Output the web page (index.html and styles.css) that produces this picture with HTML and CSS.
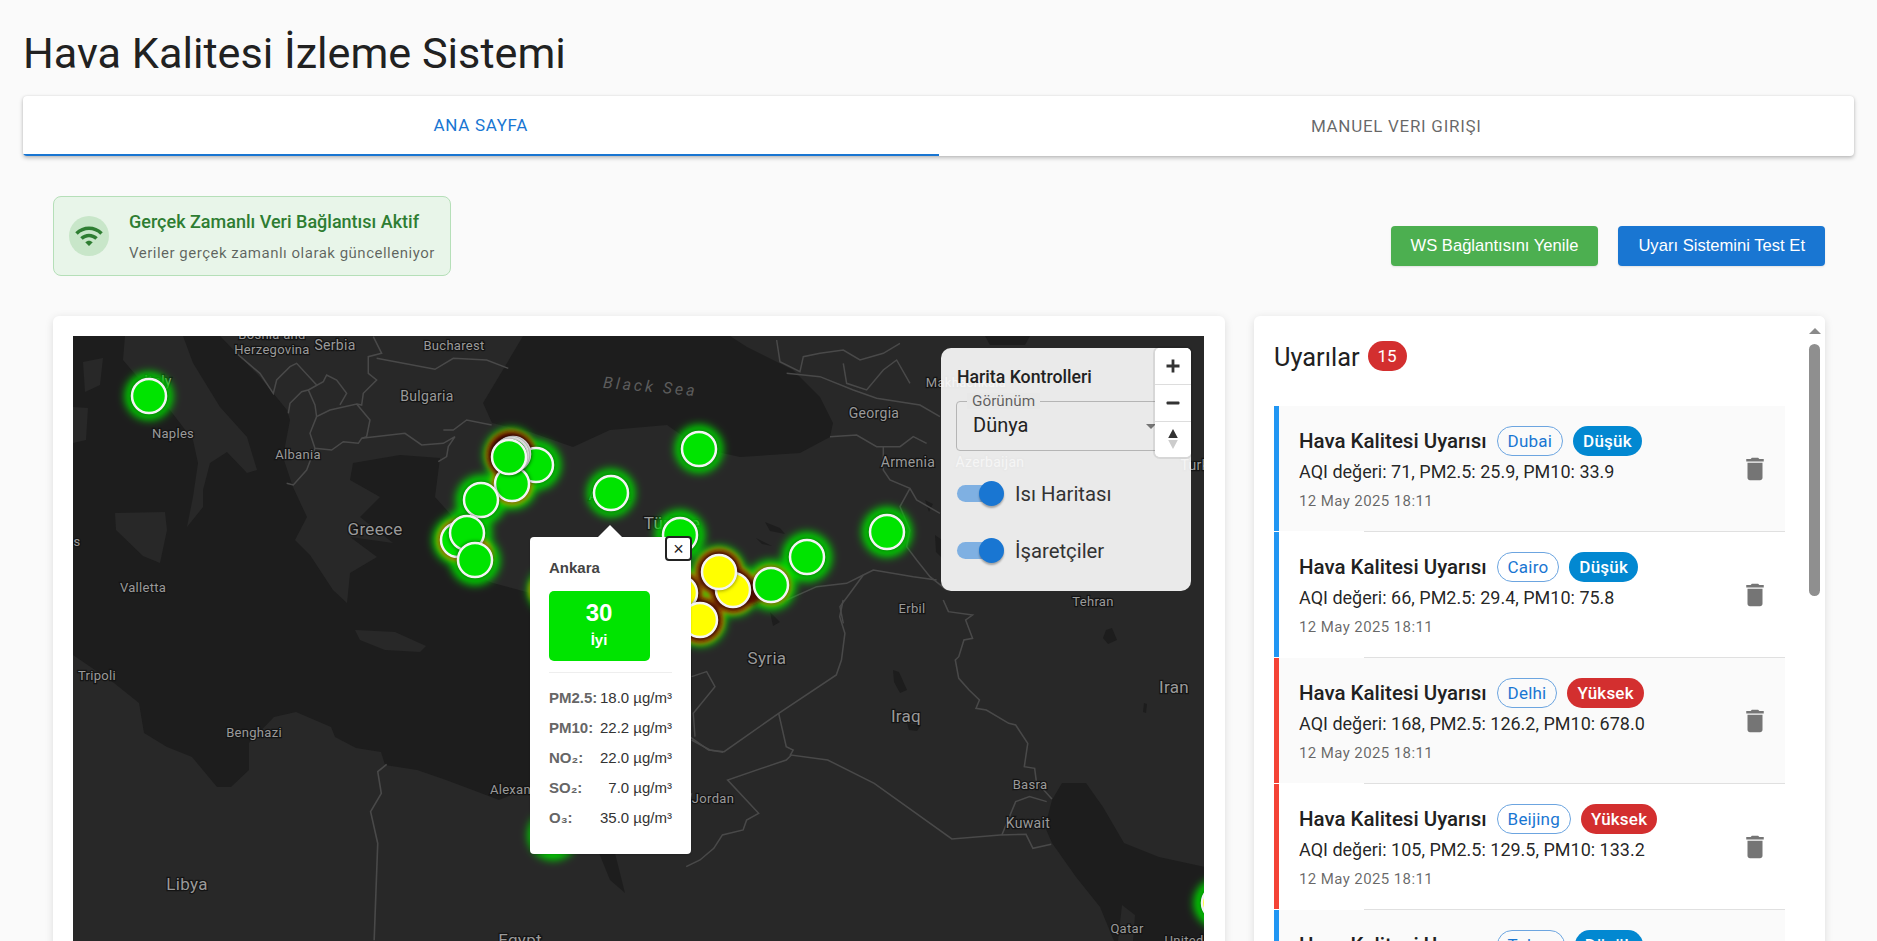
FILE: index.html
```html
<!DOCTYPE html>
<html lang="tr">
<head>
<meta charset="utf-8">
<title>Hava Kalitesi İzleme Sistemi</title>
<link rel="stylesheet" href="styles.css">
</head>
<body>
<div class="app">
  <h1 class="page-title">Hava Kalitesi İzleme Sistemi</h1>
  <nav class="tabs">
    <div class="tab tab-active">ANA SAYFA</div>
    <div class="tab">MANUEL VERI GIRIŞI</div>
  </nav>
  <main class="main">
    <section class="status-row">
      <div class="status-card">
        <div class="status-icon">
          <svg viewBox="0 0 24 24" width="30" height="30"><path d="M1 9l2 2c4.97-4.97 13.03-4.97 18 0l2-2C16.93 2.93 7.08 2.93 1 9zm8 8l3 3 3-3c-1.65-1.66-4.34-1.66-6 0zm-4-4l2 2c2.76-2.76 7.24-2.76 10 0l2-2C15.14 9.14 8.87 9.14 5 13z"/></svg>
        </div>
        <div class="status-text">
          <div class="status-title">Gerçek Zamanlı Veri Bağlantısı Aktif</div>
          <div class="status-sub">Veriler gerçek zamanlı olarak güncelleniyor</div>
        </div>
      </div>
      <div class="actions">
        <button class="btn btn-green">WS Bağlantısını Yenile</button>
        <button class="btn btn-blue">Uyarı Sistemini Test Et</button>
      </div>
    </section>
    <section class="grid">
      <div class="card map-card">
        <div class="map">
          <svg class="map-svg" viewBox="73 336 1131 700" width="1131" height="700">
            <defs>
              <filter id="b5" x="-50%" y="-50%" width="200%" height="200%"><feGaussianBlur stdDeviation="4"/></filter>
              <filter id="b3" x="-50%" y="-50%" width="200%" height="200%"><feGaussianBlur stdDeviation="2.5"/></filter>
            </defs>
            <rect class="land" x="73" y="336" width="1132" height="700"/>
            <path class="water" d="M73 336H125L123 360 147 388 170 410 193 440 198 463 193 497 187 527 203 507 203 490 210 463 227 452 247 473 257 470 247 437 220 407 193 363 183 336H220L260 377 287 410 290 420 283 457 293 487 307 517 295 540 310 555 333 590 347 603 350 573 377 557 350 537 393 543 360 517 380 497 350 480 353 463 400 455 440 458 435 497 453 517 440 543 460 570 493 583 530 593 600 615 660 620 692 650 692 700 688 745 660 780 530 787 499 800 478 792 446 780 417 770 385 765 381 752 356 748 335 737 331 727 296 712 274 717 249 743 249 770 231 787 217 787 192 757 167 747 144 733 139 703 114 683 73 655Z"/>
            <path class="water" d="M523 336L507 363 483 403 492 423 530 432 573 447 610 430 667 425 700 448 740 457 800 453 830 437 833 423 820 397 793 370 747 347 730 336Z"/>
            <path class="water" d="M1052 800L1062 783 1086 783 1103 807 1124 843 1159 857 1205 867V941H1114L1100 907 1076 877 1052 843 1045 827Z"/>
            <path class="water" d="M599 853L615 853 625 893 610 880Z"/>
            <path class="water" d="M985 336H1030L1025 345 990 345Z"/>
            <path class="water" d="M893 670L899 672 907 690 900 693 894 682ZM907 723L921 725 917 731 909 730ZM1106 630L1112 628 1117 640 1108 644 1103 638ZM1144 703L1147 704 1146 713 1143 712ZM935 535L942 540 944 560 936 552Z"/>
            <path class="water" d="M765 522L780 528 785 534 770 531ZM756 538L772 546 762 544ZM770 612L780 622 773 626ZM925 500L933 504 929 512Z"/>
            <path class="land" d="M83 362L103 358 100 385 85 392ZM73 407L88 408 86 440 73 443ZM115 513L165 512 167 530 160 563 143 556 116 530ZM355 630L395 632 426 646 420 652 385 650 360 640ZM1122 905L1135 915 1133 941 1118 941Z"/>
            <g class="borders" transform="translate(60 330) scale(.3333)">
              <path d="M530 70L600 130 640 190 650 150 690 110 710 100 770 165"/>
              <path d="M940 20L965 70 925 80 925 130 950 150 910 190 905 225 890 222"/>
              <path d="M890 222L930 270 920 320 905 325 895 340 850 335 815 360 765 355 750 310 770 260 810 240Z"/>
              <path d="M905 325L1035 310 1085 345 1150 340 1185 320 1165 350 1160 380 1135 395M1150 300L1180 300 1220 270 1295 285"/>
              <path d="M950 85L1030 100 1125 118 1180 85 1280 90 1345 115"/>
              <path d="M685 250L690 220 725 185 745 180 765 225 770 260M745 180L790 155 800 135 830 150 860 190 840 225"/>
              <path d="M765 355L740 420 700 465 680 460"/>
            </g>
            <g class="borders" transform="translate(500 330) scale(.3333)">
              <path d="M860 130L960 140 1060 180 1130 205 1260 225 1320 260"/>
              <path d="M990 320L1070 315 1130 350 1200 350 1240 320 1280 340"/>
              <path d="M1150 350L1150 420 1170 450 1230 475 1250 510 1320 550"/>
              <path d="M830 30L840 95 900 125 910 80 960 70 1030 60 1080 90 1150 70 1200 40"/>
              <path d="M1030 100L1040 160 1100 180 1150 120 1190 90 1230 160"/>
              <path d="M1230 475L1200 530 1230 600 1220 650 1250 690 1290 740 1340 780"/>
              <path d="M860 810L950 770 1040 760 1090 735 1120 720 1240 740 1310 750"/>
              <path d="M1090 735L1050 790 1020 830 1030 880"/>
            </g>
            <g class="borders" transform="translate(420 420) scale(.3333)">
              <path d="M815 770L860 755 885 800 820 880 825 950"/>
              <path d="M815 960L870 990 910 997"/>
              <path d="M760 1300L815 1120"/>
            </g>
            <g class="borders" transform="translate(700 600) scale(.345 .3333)">
              <path d="M415 0L405 50 420 100 410 180 395 225 228 340 70 455 25 450 -30 410"/>
              <path d="M228 340L250 440 270 450 262 465 370 480 505 550 730 717 870 705 945 703 965 745 1018 733"/>
              <path d="M265 465L250 480 80 540 170 640 135 660 125 690 65 705 40 745 0 780 -40 800"/>
              <path d="M705 0L720 35 790 45 770 60 790 115 765 120 750 170 740 180 750 235 780 270 810 300 800 325 830 330 895 370 915 375 950 430 940 500 970 505 975 545 1020 597"/>
              <path d="M875 705L915 605 955 590 1005 605"/>
            </g>
            <g class="borders" transform="translate(60 620) scale(.357 .3333)">
              <path d="M915 433L890 455 900 520 870 575 890 670 880 961"/>
            </g>
            <g class="labels">
              <text class="lb-sm" x="272" y="339">Bosnia and</text>
              <text class="lb-sm" x="272" y="354">Herzegovina</text>
              <text class="lb-md" x="335" y="350">Serbia</text>
              <text class="lb-sm" x="454" y="350">Bucharest</text>
              <text class="lb-md" x="158" y="386">Italy</text>
              <text class="lb-md" x="427" y="401">Bulgaria</text>
              <text class="lb-sm" x="173" y="438">Naples</text>
              <text class="lb-sm" x="298" y="459">Albania</text>
              <text class="lb-lg" x="375" y="535">Greece</text>
              <text class="lb-sm" x="77" y="546">s</text>
              <text class="lb-sm" x="143" y="592">Valletta</text>
              <text class="lb-sm" x="97" y="680">Tripoli</text>
              <text class="lb-sm" x="254" y="737">Benghazi</text>
              <text class="lb-sm" x="522" y="794">Alexandria</text>
              <text class="lb-lg" x="187" y="890">Libya</text>
              <text class="lb-lg" x="520" y="946">Egypt</text>
              <text class="lb-sea" transform="translate(650 392) rotate(5)">Black Sea</text>
              <text class="lb-md" x="874" y="418">Georgia</text>
              <text class="lb-sm" x="966" y="387">Makhachkala</text>
              <text class="lb-md" x="908" y="467">Armenia</text>
              <text class="lb-md" x="990" y="467">Azerbaijan</text>
              <text class="lb-lg" x="672" y="529">Türkiye</text>
              <text class="lb-sm" x="610" y="500">Ankara</text>
              <text class="lb-sm" x="912" y="613">Erbil</text>
              <text class="lb-sm" x="1093" y="606">Tehran</text>
              <text class="lb-md" x="1225" y="470">Turkmenistan</text>
              <text class="lb-lg" x="767" y="664">Syria</text>
              <text class="lb-sm" x="713" y="803">Jordan</text>
              <text class="lb-lg" x="906" y="722">Iraq</text>
              <text class="lb-lg" x="1174" y="693">Iran</text>
              <text class="lb-sm" x="1030" y="789">Basra</text>
              <text class="lb-md" x="1028" y="828">Kuwait</text>
              <text class="lb-sm" x="1127" y="933">Qatar</text>
              <text class="lb-sm" x="1184" y="945">United</text>
            </g>
            <g class="heat-green" filter="url(#b5)">
              <circle cx="149" cy="396" r="24"/><circle cx="481" cy="500" r="25"/><circle cx="512" cy="484" r="25"/><circle cx="536" cy="465" r="25"/><circle cx="511" cy="455" r="27"/><circle cx="458" cy="540" r="25"/><circle cx="467" cy="533" r="25"/><circle cx="475" cy="560" r="25"/><circle cx="699" cy="449" r="24"/><circle cx="611" cy="493" r="24"/><circle cx="680" cy="535" r="25"/><circle cx="719" cy="572" r="26"/><circle cx="733" cy="590" r="26"/><circle cx="771" cy="585" r="25"/><circle cx="807" cy="557" r="25"/><circle cx="887" cy="532" r="25"/><circle cx="700" cy="620" r="26"/><circle cx="680" cy="593" r="26"/><circle cx="553" cy="590" r="25"/><circle cx="553" cy="835" r="25"/><circle cx="1219" cy="903" r="25"/>
            </g>
            <g class="heat-yellow" filter="url(#b3)">
              <circle cx="511" cy="455" r="25"/><circle cx="512" cy="484" r="21"/><circle cx="458" cy="540" r="21"/><circle cx="475" cy="555" r="18"/><circle cx="719" cy="572" r="24"/><circle cx="733" cy="590" r="24"/><circle cx="700" cy="620" r="24"/><circle cx="680" cy="593" r="23"/><circle cx="771" cy="585" r="20"/><circle cx="548" cy="590" r="19"/>
            </g>
            <g class="heat-red" filter="url(#b3)">
              <circle cx="511" cy="455" r="24"/><circle cx="719" cy="572" r="22"/><circle cx="733" cy="590" r="22"/><circle cx="700" cy="620" r="22"/><circle cx="680" cy="593" r="21"/><circle cx="750" cy="592" r="13"/>
            </g>
            <g class="markers">
              <circle class="mk-g" cx="149" cy="396" r="17"/>
              <circle class="mk-g" cx="536" cy="465" r="17"/>
              <circle class="mk-g" cx="512" cy="484" r="17"/>
              <circle class="mk-g" cx="513" cy="454" r="17"/>
              <circle class="mk-g" cx="511" cy="455" r="17"/>
              <circle class="mk-g" cx="509" cy="457" r="17"/>
              <circle class="mk-g" cx="481" cy="500" r="17"/>
              <circle class="mk-g" cx="458" cy="540" r="17"/>
              <circle class="mk-g" cx="467" cy="533" r="17"/>
              <circle class="mk-g" cx="475" cy="560" r="17"/>
              <circle class="mk-g" cx="699" cy="449" r="17"/>
              <circle class="mk-g" cx="611" cy="493" r="17"/>
              <circle class="mk-g" cx="680" cy="535" r="17"/>
              <circle class="mk-y" cx="680" cy="593" r="17"/>
              <circle class="mk-y" cx="733" cy="590" r="17"/>
              <circle class="mk-y" cx="719" cy="572" r="17"/>
              <circle class="mk-y" cx="700" cy="620" r="17"/>
              <circle class="mk-g" cx="771" cy="585" r="17"/>
              <circle class="mk-g" cx="807" cy="557" r="17"/>
              <circle class="mk-g" cx="887" cy="532" r="17"/>
              <circle class="mk-y" cx="1219" cy="903" r="17"/>
            </g>
          </svg>
          <div class="popup">
            <span class="popup-tip"></span>
            <button class="popup-close">×</button>
            <div class="popup-city">Ankara</div>
            <div class="aqi-box">
              <div class="aqi-num">30</div>
              <div class="aqi-label">İyi</div>
            </div>
            <div class="popup-rows">
              <div class="popup-row"><b>PM2.5:</b><span>18.0 µg/m³</span></div>
              <div class="popup-row"><b>PM10:</b><span>22.2 µg/m³</span></div>
              <div class="popup-row"><b>NO₂:</b><span>22.0 µg/m³</span></div>
              <div class="popup-row"><b>SO₂:</b><span>7.0 µg/m³</span></div>
              <div class="popup-row"><b>O₃:</b><span>35.0 µg/m³</span></div>
            </div>
          </div>
          <div class="panel">
            <div class="panel-title">Harita Kontrolleri</div>
            <div class="select">
              <span class="select-label">Görünüm</span>
              <span class="select-value">Dünya</span>
              <span class="select-arrow"></span>
            </div>
            <div class="switch-row">
              <span class="switch"><span class="switch-thumb"></span></span>
              <span class="switch-label">Isı Haritası</span>
            </div>
            <div class="switch-row">
              <span class="switch"><span class="switch-thumb"></span></span>
              <span class="switch-label">İşaretçiler</span>
            </div>
          </div>
          <div class="zoom-ctrl">
            <button class="zoom-btn"><svg viewBox="0 0 16 16" width="16" height="16"><path d="M6.600 1.500h2.800v5.100h5.100v2.800H9.400v5.100H6.600V9.400H1.500V6.600h5.100z"/></svg></button>
            <button class="zoom-btn"><svg viewBox="0 0 16 16" width="16" height="16"><rect x="1.500" y="6.600" width="13" height="2.800" rx="1"/></svg></button>
            <button class="zoom-btn"><svg viewBox="0 0 12 24" width="12" height="24"><path d="M6 2l4.800 9H1.200z"/><path class="compass-low" d="M6 22l4.800-9H1.200z"/></svg></button>
          </div>
        </div>
      </div>
      <aside class="card alerts-card">
        <div class="alerts-body">
          <div class="alerts-head">
            <h2 class="alerts-title">Uyarılar</h2>
            <span class="alerts-count">15</span>
          </div>
          <ul class="alert-list">
            <li class="alert alert-low alert-odd">
              <div class="alert-main">
                <div class="alert-top"><strong class="alert-title">Hava Kalitesi Uyarısı</strong><span class="chip chip-city">Dubai</span><span class="chip chip-low">Düşük</span></div>
                <div class="alert-text">AQI değeri: 71, PM2.5: 25.9, PM10: 33.9</div>
                <div class="alert-date">12 May 2025 18:11</div>
              </div>
              <svg class="trash" viewBox="0 0 24 24" width="30" height="30"><path d="M6 19c0 1.100.9 2 2 2h8c1.100 0 2-.9 2-2V7H6v12zM19 4h-3.500l-1-1h-5l-1 1H5v2h14V4z"/></svg>
            </li>
            <li class="divider"></li>
            <li class="alert alert-low">
              <div class="alert-main">
                <div class="alert-top"><strong class="alert-title">Hava Kalitesi Uyarısı</strong><span class="chip chip-city">Cairo</span><span class="chip chip-low">Düşük</span></div>
                <div class="alert-text">AQI değeri: 66, PM2.5: 29.4, PM10: 75.8</div>
                <div class="alert-date">12 May 2025 18:11</div>
              </div>
              <svg class="trash" viewBox="0 0 24 24" width="30" height="30"><path d="M6 19c0 1.100.9 2 2 2h8c1.100 0 2-.9 2-2V7H6v12zM19 4h-3.500l-1-1h-5l-1 1H5v2h14V4z"/></svg>
            </li>
            <li class="divider"></li>
            <li class="alert alert-high alert-odd">
              <div class="alert-main">
                <div class="alert-top"><strong class="alert-title">Hava Kalitesi Uyarısı</strong><span class="chip chip-city">Delhi</span><span class="chip chip-high">Yüksek</span></div>
                <div class="alert-text">AQI değeri: 168, PM2.5: 126.2, PM10: 678.0</div>
                <div class="alert-date">12 May 2025 18:11</div>
              </div>
              <svg class="trash" viewBox="0 0 24 24" width="30" height="30"><path d="M6 19c0 1.100.9 2 2 2h8c1.100 0 2-.9 2-2V7H6v12zM19 4h-3.500l-1-1h-5l-1 1H5v2h14V4z"/></svg>
            </li>
            <li class="divider"></li>
            <li class="alert alert-high">
              <div class="alert-main">
                <div class="alert-top"><strong class="alert-title">Hava Kalitesi Uyarısı</strong><span class="chip chip-city">Beijing</span><span class="chip chip-high">Yüksek</span></div>
                <div class="alert-text">AQI değeri: 105, PM2.5: 129.5, PM10: 133.2</div>
                <div class="alert-date">12 May 2025 18:11</div>
              </div>
              <svg class="trash" viewBox="0 0 24 24" width="30" height="30"><path d="M6 19c0 1.100.9 2 2 2h8c1.100 0 2-.9 2-2V7H6v12zM19 4h-3.500l-1-1h-5l-1 1H5v2h14V4z"/></svg>
            </li>
            <li class="divider"></li>
            <li class="alert alert-low alert-odd">
              <div class="alert-main">
                <div class="alert-top"><strong class="alert-title">Hava Kalitesi Uyarısı</strong><span class="chip chip-city">Tokyo</span><span class="chip chip-low">Düşük</span></div>
                <div class="alert-text">AQI değeri: 58, PM2.5: 22.1, PM10: 41.6</div>
                <div class="alert-date">12 May 2025 18:11</div>
              </div>
              <svg class="trash" viewBox="0 0 24 24" width="30" height="30"><path d="M6 19c0 1.100.9 2 2 2h8c1.100 0 2-.9 2-2V7H6v12zM19 4h-3.500l-1-1h-5l-1 1H5v2h14V4z"/></svg>
            </li>
          </ul>
        </div>
        <div class="scrollbar">
          <span class="scroll-arrow"></span>
          <span class="scroll-thumb"></span>
        </div>
      </aside>
    </section>
  </main>
</div>
</body>
</html>
```

FILE: styles.css
```css
* { box-sizing: border-box; }
html, body { margin: 0; height: 100%; overflow: hidden; }
body { background: #fafafa; font-family: Roboto, "Liberation Sans", sans-serif; color: rgba(0,0,0,.87); }
.app { height: 941px; overflow: hidden; padding: 0 23px; }

.page-title { margin: 0; padding-top: 28px; height: 96px; font-size: 43.200px; line-height: 52px; font-weight: 400; letter-spacing: 0; color: #212121; }

.tabs { display: grid; grid-template-columns: 1fr 1fr; height: 60px; background: #fff; border-radius: 4px; box-shadow: 0 2px 4px rgba(0,0,0,.25), 0 0 2px rgba(0,0,0,.1); overflow: hidden; }
.tab { display: flex; align-items: center; justify-content: center; font-size: 17px; letter-spacing: .7px; color: rgba(0,0,0,.6); }
.tab-active { color: #1976d2; border-bottom: 2px solid #1976d2; }

.main { padding: 40px 29px 0 30px; }
.status-row { display: flex; justify-content: space-between; align-items: flex-start; height: 80px; margin-bottom: 40px; }
.status-card { display: flex; align-items: center; gap: 20px; width: 398px; height: 80px; padding: 0 15px; background: #e8f5e9; border: 1px solid #b5dfb8; border-radius: 8px; }
.status-icon { display: flex; align-items: center; justify-content: center; width: 40px; height: 40px; border-radius: 50%; background: #c8e6c9; fill: #2e7d32; flex: none; }
.status-text { display: flex; flex-direction: column; gap: 10px; }
.status-title { font-size: 18px; line-height: 22px; font-weight: 500; color: #2e7d32; margin-top: 1px; }
.status-sub { font-size: 15px; line-height: 20px; letter-spacing: .5px; color: rgba(0,0,0,.6); }
.actions { display: flex; gap: 20px; margin-top: 30px; }
.btn { height: 40px; padding: 0 20px; border: 0; border-radius: 4px; font-family: "Liberation Sans", Arial, sans-serif; font-size: 16.600px; color: #fff; box-shadow: 0 1px 2px rgba(0,0,0,.1); }
.btn-green { background: #4caf50; }
.btn-blue { background: #1976d2; }

.grid { display: grid; grid-template-columns: 1172px 571px; gap: 29px; }
.card { background: #fff; border-radius: 6px; box-shadow: 0 2px 8px rgba(0,0,0,.12); }
.map-card { padding: 20px; height: 740px; }
.map { position: relative; width: 1131px; height: 700px; overflow: hidden; }
.map-svg { display: block; }

.land { fill: #282828; }
.water { fill: #1d1d1d; }
.borders path { fill: none; stroke: #494949; stroke-width: 4.500; }
.labels text { font-family: Roboto, sans-serif; text-anchor: middle; fill: #9a9a9a; paint-order: stroke; stroke: #141414; stroke-width: 2.500px; letter-spacing: .3px; }
.lb-sm { font-size: 13px; }
.lb-md { font-size: 14px; }
.lb-lg { font-size: 17px; }
.labels .lb-sea { font-size: 16px; font-style: italic; letter-spacing: 3px; fill: #5c5c5c; stroke: none; }

.heat-green circle { fill: #00d800; }
.heat-yellow circle { fill: #c89c00; }
.heat-red circle { fill: #5a0a00; }
.markers circle { stroke: #f4f4f4; stroke-width: 2.500; filter: drop-shadow(0 0 2px rgba(0,0,0,.55)); }
.mk-g { fill: #00e400; }
.mk-y { fill: #ffff00; }

.popup { position: absolute; left: 457px; top: 201px; width: 161px; height: 317px; padding: 21px 19px; background: #fff; border-radius: 4px; box-shadow: 0 1px 2px rgba(0,0,0,.2); font-family: "Liberation Sans", Arial, sans-serif; }
.popup-tip { position: absolute; left: 68px; top: -12px; width: 0; height: 0; border: 12px solid transparent; border-top: 0; border-bottom-color: #fff; }
.popup-close { position: absolute; right: -1px; top: -1px; width: 27px; height: 25px; padding: 0; background: #fff; border: 2px solid #222; border-radius: 4px; font-family: "Liberation Sans", Arial, sans-serif; font-size: 18px; line-height: 18px; color: #222; }
.popup-city { font-size: 15px; line-height: 20px; font-weight: 700; color: #444; }
.aqi-box { display: flex; flex-direction: column; align-items: center; width: 101px; height: 70px; margin: 13px 0 0; margin-left: -.5px; padding-top: 8px; background: #00e400; border-radius: 5px; color: #fff; font-weight: 700; }
.aqi-num { font-size: 24px; line-height: 28px; }
.aqi-label { font-size: 15px; line-height: 20px; margin-top: 3px; }
.popup-rows { margin-top: 11px; padding-top: 9px; border-top: 1px solid #eee; }
.popup-row { display: flex; justify-content: space-between; align-items: center; height: 30px; font-size: 15px; color: #333; white-space: nowrap; }
.popup-row b { color: #666; }

.panel { position: absolute; left: 868px; top: 12px; width: 250px; height: 243px; padding: 19px 16px 0; background: rgba(255,255,255,.9); border-radius: 10px; }
.panel-title { font-size: 17.700px; line-height: 20px; font-weight: 500; color: #222; }
.select { position: relative; display: flex; align-items: center; height: 50px; margin: 14px 0 0 -1px; width: 219px; padding-left: 17px; border: 1px solid #b5b5b5; border-radius: 4px; }
.select-label { position: absolute; left: 10px; top: -9px; padding: 0 5px; font-size: 15.300px; line-height: 16px; color: rgba(0,0,0,.6); background: #e8e8e8; }
.select-value { font-size: 20px; color: #222; margin-left: -1px; margin-top: -2px; }
.select-arrow { position: absolute; right: 18px; top: 22px; width: 0; height: 0; border: 5px solid transparent; border-top-color: #757575; border-bottom: 0; }
.switch-row { display: flex; align-items: center; gap: 11px; height: 25px; margin-top: 32px; }
.select + .switch-row { margin-top: 30px; }
.switch { position: relative; display: block; width: 47px; height: 25px; flex: none; }
.switch::before { content: ""; position: absolute; left: 0; top: 4px; width: 41px; height: 17px; border-radius: 9px; background: #7fb0e2; }
.switch-thumb { position: absolute; right: 0; top: 0; width: 25px; height: 25px; border-radius: 50%; background: #1976d2; box-shadow: 0 2px 2px rgba(0,0,0,.3); }
.switch-label { font-size: 20.300px; color: #333; }

.zoom-ctrl { position: absolute; right: 13px; top: 12px; width: 36px; background: #fff; border-radius: 5px; box-shadow: 0 0 0 2px rgba(0,0,0,.08); overflow: hidden; }
.zoom-btn { display: flex; align-items: center; justify-content: center; width: 36px; height: 36.300px; padding: 0; background: #fff; border: 0; border-top: 1px solid #ddd; fill: #333; }
.zoom-btn:first-child { border-top: 0; }
.compass-low { fill: #ccc; }

.alerts-card { display: flex; height: 740px; overflow: hidden; }
.alerts-body { flex: 1; min-width: 0; padding: 25px 20px 0; }
.alerts-head { display: flex; align-items: center; gap: 8px; height: 30px; margin-bottom: 35px; }
.alerts-title { margin: 2px 0 0; font-size: 25.400px; line-height: 30px; font-weight: 400; color: #212121; }
.alerts-count { display: flex; align-items: center; justify-content: center; width: 39px; height: 30px; border-radius: 15px; background: #d32f2f; color: #fff; font-size: 17px; }
.alert-list { list-style: none; margin: 0; padding: 0; }
.alert { display: flex; align-items: center; justify-content: space-between; height: 125px; padding: 0 15px 0 20px; border-left: 5px solid; }
.alert-odd { background: #fafafa; }
.alert-low { border-left-color: #2196f3; }
.alert-high { border-left-color: #f44336; }
.divider { height: 1px; margin-left: 90px; background: #e0e0e0; }
.alert-top { display: flex; align-items: center; gap: 10px; height: 30px; margin-top: 1px; }
.alert-title { font-size: 20.500px; font-weight: 500; color: #212121; }
.chip { display: flex; align-items: center; height: 30px; padding: 0 10px; border-radius: 15px; font-size: 17px; letter-spacing: .2px; }
.chip-city { border: 1px solid #6ca5e0; color: #1976d2; }
.chip-low { background: #0288d1; color: #fff; font-weight: 500; }
.chip-high { background: #d32f2f; color: #fff; font-weight: 500; }
.alert-text { margin-top: 3px; font-size: 18px; line-height: 26px; color: rgba(0,0,0,.87); }
.alert-date { margin-top: 4px; font-size: 15px; line-height: 24px; letter-spacing: .4px; color: rgba(0,0,0,.6); }
.trash { fill: #757575; flex: none; }

.scrollbar { flex: none; width: 20px; display: flex; flex-direction: column; align-items: center; padding: 12px 1px 0 0; background: #fff; }
.scroll-arrow { width: 0; height: 0; border: 6.500px solid transparent; border-top: 0; border-bottom-color: #8a8a8a; }
.scroll-thumb { width: 11px; height: 252px; margin-top: 10px; border-radius: 6px; background: #8f8f8f; }
```
